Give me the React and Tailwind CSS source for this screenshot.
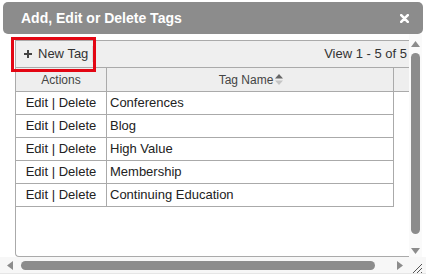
const TAGS = ["Conferences", "Blog", "High Value", "Membership", "Continuing Education"];

function Tri({ dir, className }) {
  const pts = {
    up: "0,6 4.5,0 9,6",
    down: "0,0 4.5,6 9,0",
    left: "6,0 0,4.5 6,9",
    right: "0,0 6,4.5 0,9",
  }[dir];
  const vertical = dir === "up" || dir === "down";
  return (
    <svg width={vertical ? 9 : 6} height={vertical ? 6 : 9} viewBox={vertical ? "0 0 9 6" : "0 0 6 9"} className={className}>
      <polygon points={pts} fill="#8c8c8c" />
    </svg>
  );
}

function SortIcon() {
  return (
    <svg width="8" height="11" viewBox="0 0 8 11" className="ml-[2px]">
      <polygon points="0,4.5 4,0 8,4.5" fill="#666" />
      <polygon points="0,6.5 4,11 8,6.5" fill="#c4c4c4" />
    </svg>
  );
}

function TitleBar() {
  return (
    <div className="mx-[3px] mt-[2px] flex h-[32px] shrink-0 items-center justify-between rounded-[5px] bg-[#8c8c8c] pl-[18px] pr-[14px]">
      <div className="text-[14px] font-bold leading-none text-white">Add, Edit or Delete Tags</div>
      <svg width="9" height="9" viewBox="0 0 9 9">
        <path d="M1.2 1.2 L7.8 7.8 M7.8 1.2 L1.2 7.8" stroke="white" strokeWidth="2.6" strokeLinecap="round" />
      </svg>
    </div>
  );
}

function Toolbar() {
  return (
    <div className="flex h-[27px] shrink-0 items-center justify-between border-b border-[#aaa] bg-[#efefef] pr-[2px]">
      <div className="flex h-full items-center">
        <div className="flex items-center pl-[8px] pr-[4px] text-[13px] text-[#333]">
          <svg width="8" height="8" viewBox="0 0 8 8" className="mr-[6px]">
            <path d="M4 0 V8 M0 4 H8" stroke="#444" strokeWidth="2" />
          </svg>
          New Tag
        </div>
        <div className="h-[16px] w-[2px] bg-[#dcdcdc]" />
      </div>
      <div className="text-[13px] text-[#333]">View 1 - 5 of 5</div>
    </div>
  );
}

function HeaderRow() {
  return (
    <div className="flex h-[24px] shrink-0 border-b border-[#aaa] bg-[#eeeeee] text-[12px] text-[#444]">
      <div className="flex w-[91px] items-center justify-center border-r border-[#aaa]">Actions</div>
      <div className="flex w-[287px] items-center justify-center border-r border-[#aaa] pl-[2px]">
        Tag Name
        <SortIcon />
      </div>
      <div className="flex-1" />
    </div>
  );
}

function TagRow({ name }) {
  return (
    <div className="flex h-[23px] w-[378px] shrink-0 border-b border-r border-[#aaa] text-[13px] text-[#222]">
      <div className="flex w-[91px] items-center justify-center border-r border-[#aaa]">Edit | Delete</div>
      <div className="flex flex-1 items-center pl-[3px]">{name}</div>
    </div>
  );
}

function VScroll() {
  return (
    <div className="flex w-[13px] flex-col items-center bg-[#fafafa] pt-[7px]">
      <Tri dir="up" />
      <div className="mt-[6px] h-[181px] w-[9px] rounded-full bg-[#8c8c8c]" />
      <Tri dir="down" className="mt-[14px]" />
    </div>
  );
}

function HScroll() {
  return (
    <div className="flex h-[16px] shrink-0 items-center bg-[#f7f7f7] pl-[7px]">
      <Tri dir="left" />
      <div className="ml-[8px] h-[9px] w-[354px] rounded-full bg-[#8c8c8c]" />
      <Tri dir="right" className="ml-[22px]" />
      <svg width="11" height="11" viewBox="0 0 11 11" className="ml-[8px] mt-[7px]">
        <path d="M11 1 L1 11 M11 5 L5 11 M11 9 L9 11" stroke="#555" strokeWidth="1" />
      </svg>
    </div>
  );
}

export default function App() {
  return (
    <div className="relative flex h-[275px] w-[426px] flex-col overflow-hidden bg-white font-['Liberation_Sans',Arial,sans-serif]">
      <TitleBar />
      <div className="flex h-[223px] shrink-0">
        <div className="w-[409px] pl-[15px] pt-[6px]">
          <div className="flex h-[217px] flex-col rounded-bl-[4px] border-b border-l border-t border-[#aaa] bg-white">
            <Toolbar />
            <HeaderRow />
            {TAGS.map((t) => (
              <TagRow key={t} name={t} />
            ))}
          </div>
        </div>
        <VScroll />
      </div>
      <HScroll />
      <div className="flex-1 border-t border-[#e6e6e6] bg-white" />
      <div className="absolute left-[11px] top-[37px] h-[35px] w-[85px] border-[3px] border-[#e30613]" />
    </div>
  );
}
